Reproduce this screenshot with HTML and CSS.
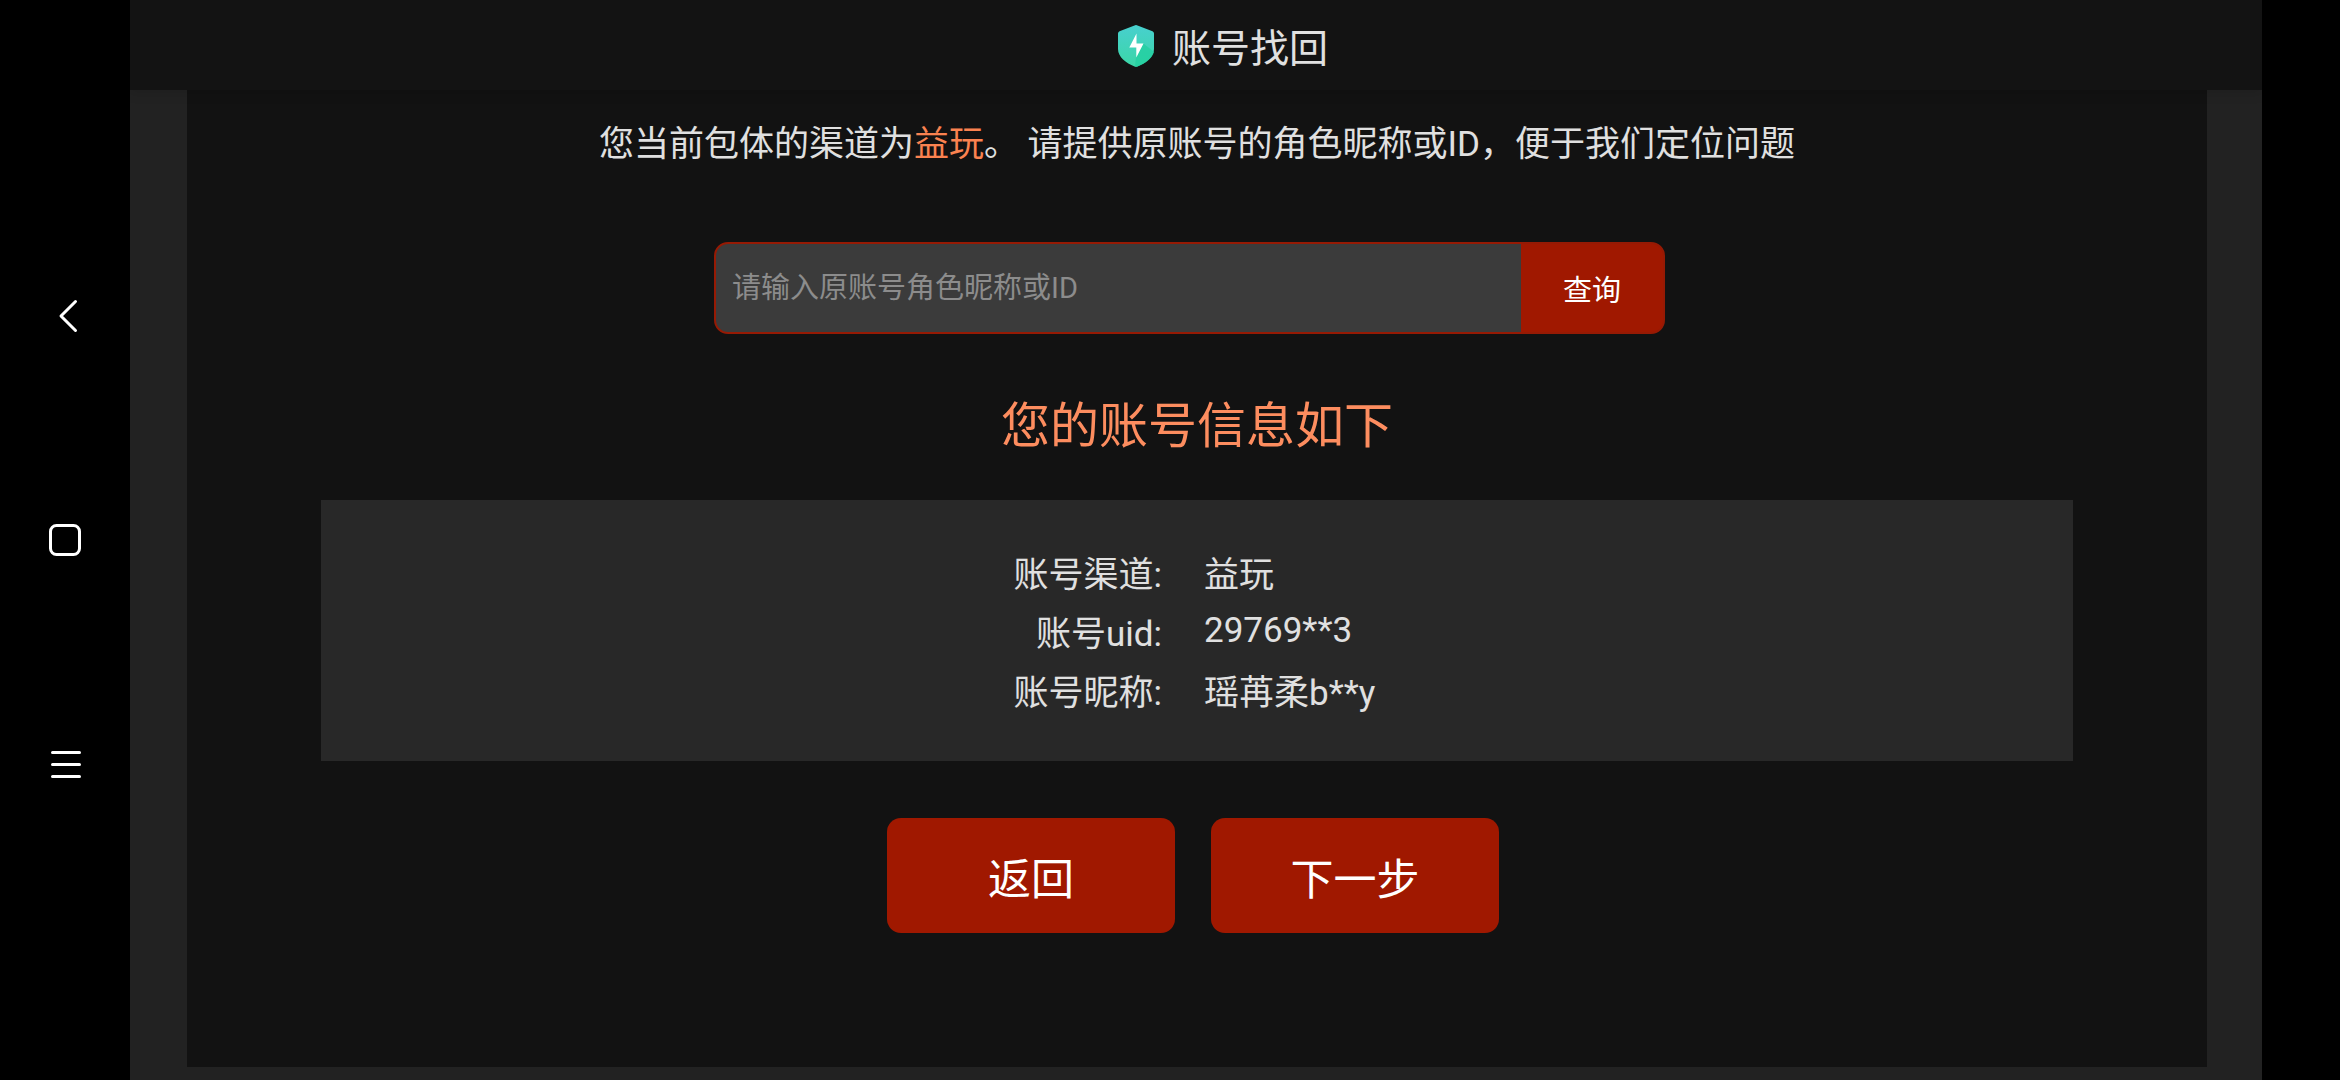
FILE: index.html
```html
<!DOCTYPE html>
<html lang="zh-CN">
<head>
<meta charset="utf-8">
<meta name="viewport" content="width=device-width, initial-scale=1">
<title>账号找回</title>
<link rel="stylesheet" href="styles.css">
</head>
<body>
<nav class="rail" aria-label="系统导航">
  <button class="rail-button" type="button" aria-label="后退">
    <svg width="36" height="36" viewBox="0 0 36 36"><path d="M28.500 3.500 14 18 28.500 32.500"/></svg>
  </button>
  <button class="rail-button" type="button" aria-label="主页">
    <svg width="36" height="36" viewBox="0 0 36 36"><rect x="3.500" y="3.500" width="29" height="29" rx="6"/></svg>
  </button>
  <button class="rail-button" type="button" aria-label="菜单">
    <svg width="36" height="36" viewBox="0 0 36 36"><path d="M5.500 6.500H32.500M5.500 18.500H32.500M5.500 30.500H32.500"/></svg>
  </button>
</nav>
<div class="app">
  <header class="topbar">
    <svg class="logo" width="36" height="42" viewBox="0 0 36 42" aria-hidden="true">
      <defs>
        <linearGradient id="shield" x1="0" y1="0" x2="0" y2="1">
          <stop offset="0" stop-color="#48d0cf"/>
          <stop offset="1" stop-color="#3bd6a6"/>
        </linearGradient>
      </defs>
      <path fill="url(#shield)" d="M16.500.4Q18-.3 19.500.4L34.500 6.300Q36 7 36 8.500V24C36 32 28 38 19.500 41.500Q18 42 16.500 41.500C8 38 0 32 0 24V8.500Q0 7 1.500 6.300Z"/>
      <path fill="#22cfa0" d="M25.500 18.500 36 27C34 34 27 38.500 19.500 41.500Q18 42 17 41.700L18 32Z" opacity=".75"/>
      <path fill="#fff" d="M18.500 8.500 11.300 22.500H18.300V32.500L25.500 18.500H18.500Z"/>
    </svg>
    <h1 class="title">账号找回</h1>
  </header>
  <main class="content">
    <p class="hint">您当前包体的渠道为<span class="channel">益玩</span>。 请提供原账号的角色昵称或ID，便于我们定位问题</p>
    <form class="search">
      <div class="search-box">
        <input class="search-input" type="text" aria-label="原账号角色昵称或ID" placeholder="请输入原账号角色昵称或ID">
        <button class="search-button" type="button">查询</button>
      </div>
    </form>
    <h2 class="result-title">您的账号信息如下</h2>
    <section class="panel">
      <table class="info">
        <tbody>
          <tr><th scope="row">账号渠道:</th><td>益玩</td></tr>
          <tr><th scope="row">账号uid:</th><td>29769**3</td></tr>
          <tr><th scope="row">账号昵称:</th><td>瑶苒柔b**y</td></tr>
        </tbody>
      </table>
    </section>
    <div class="actions">
      <button class="action" type="button">返回</button>
      <button class="action" type="button">下一步</button>
    </div>
  </main>
</div>
</body>
</html>
```

FILE: styles.css
```css
* {
  box-sizing: border-box;
}

body {
  margin: 0;
  min-height: 100vh;
  display: flex;
  background: #000;
  color: #e0e0e0;
  font-family: Roboto, "Noto Sans CJK SC", sans-serif;
  font-size: 35px;
}

button,
input {
  font-family: inherit;
  margin: 0;
  border: 0;
}

/* System navigation */
.rail {
  flex: 0 0 130px;
  display: flex;
  flex-direction: column;
  align-items: center;
  justify-content: center;
  gap: 160px;
}

.rail-button {
  width: 64px;
  height: 64px;
  padding: 0;
  display: flex;
  align-items: center;
  justify-content: center;
  background: none;
}

.rail-button svg {
  fill: none;
  stroke: #fff;
  stroke-width: 3;
  stroke-linecap: round;
  stroke-linejoin: round;
}

/* Page */
.app {
  flex: 1;
  min-width: 0;
  margin-right: 78px;
  display: flex;
  flex-direction: column;
  background: #222;
}

.topbar {
  height: 90px;
  padding: 0 0 0 54px;
  display: flex;
  align-items: center;
  justify-content: center;
  gap: 18px;
  background: #131313;
  box-shadow: 0 2px 12px rgba(0, 0, 0, 0.15);
  z-index: 1;
}

.logo {
  margin-top: 2px;
}

.title {
  margin: 8px 0 0;
  font-size: 39px;
  font-weight: 400;
  line-height: 56px;
}

.content {
  flex: 1;
  margin: 0 55px 13px 57px;
  padding: 27px 0 40px;
  background: #121212;
}

.hint {
  margin: 0;
  line-height: 56px;
  text-align: center;
}

.channel {
  color: #fa8250;
}

.search {
  margin-top: 69px;
  padding-right: 15px;
  display: flex;
  justify-content: center;
}

.search-box {
  width: 951px;
  max-width: 100%;
  height: 92px;
  display: flex;
  overflow: hidden;
  border: 2px solid #961a04;
  border-radius: 14px;
  background: #a01800;
}

.search-input {
  flex: 1;
  min-width: 0;
  padding: 0 16px;
  background: #3b3b3b;
  color: #e0e0e0;
  font-size: 29px;
}

.search-input::placeholder {
  color: #8c8c8c;
}

.search-button {
  width: 142px;
  background: #a01800;
  color: #fff;
  font-size: 29px;
}

.result-title {
  margin: 58px 0 38px;
  color: #fd8d5f;
  font-size: 49px;
  font-weight: 400;
  line-height: 70px;
  text-align: center;
}

.panel {
  margin: 0 134px;
  padding: 42px 0;
  background: #282828;
}

.info {
  width: 100%;
  table-layout: fixed;
  border-collapse: collapse;
}

.info th,
.info td {
  padding: 4px 0;
  font-weight: 400;
  vertical-align: middle;
}

.info th {
  padding-right: 35px;
  text-align: right;
}

.info td {
  padding-left: 7px;
}

.actions {
  margin-top: 57px;
  padding-right: 8px;
  display: flex;
  justify-content: center;
  gap: 36px;
}

.action {
  width: 288px;
  height: 115px;
  border-radius: 14px;
  background: #a01800;
  color: #fff;
  font-size: 43px;
}
```
